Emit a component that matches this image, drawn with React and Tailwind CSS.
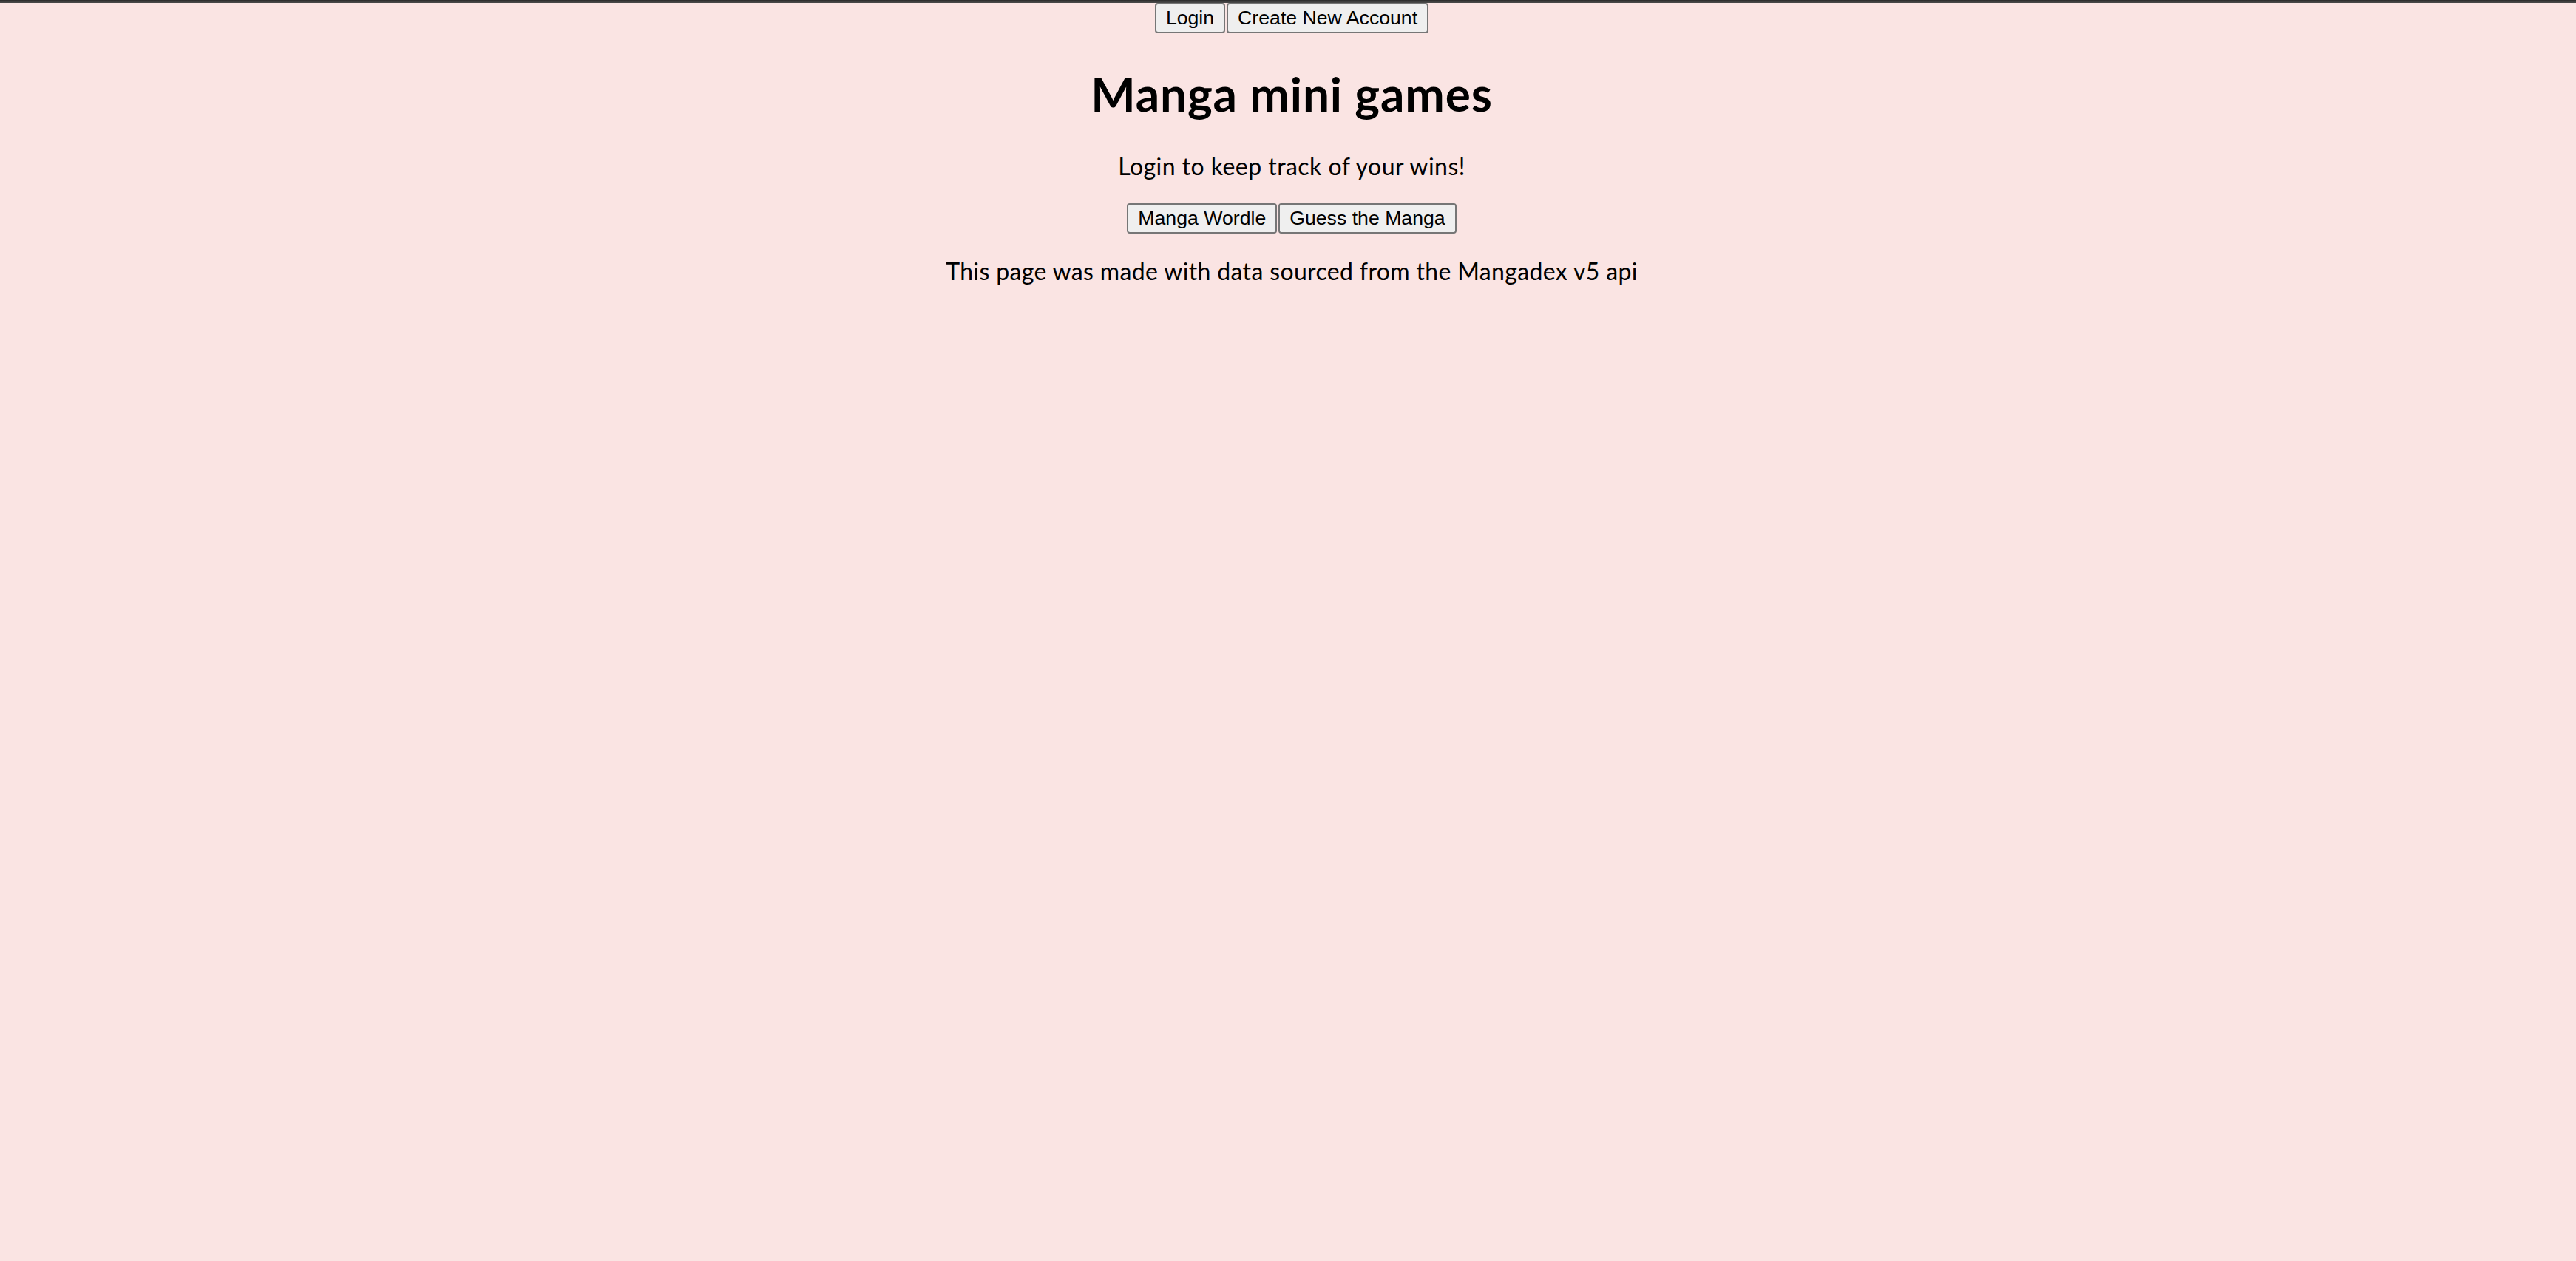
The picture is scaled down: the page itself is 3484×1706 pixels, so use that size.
const btn =
    "h-[41px] px-[13px] inline-flex items-center justify-center bg-[#efefef] border-2 border-[#767676] rounded-[4px] text-black text-[26.67px] leading-none tracking-normal font-['Liberation_Sans',Arial,sans-serif]";

export default function App() {
    return (
        <div className="min-h-screen pl-[10px] bg-[#fae4e3] text-black text-center font-['Lato','Open_Sans',sans-serif]">
            <div className="-ml-[10px] h-[4px] bg-gradient-to-b from-[#2c2c2c] to-[#4b4b4b]" />

            <div className="flex justify-center gap-[2px]">
                <button className={btn}>Login</button>
                <button className={btn}>Create New Account</button>
            </div>

            <h1 className="mt-[45px] text-[64px] font-bold leading-[74px] tracking-[0.85px]">Manga mini games</h1>

            <p className="mt-[42px] text-[32px] leading-[37px] tracking-[0.45px]">Login to keep track of your wins!</p>

            <div className="mt-[32px] flex justify-center gap-[2px]">
                <button className={btn}>Manga Wordle</button>
                <button className={btn}>Guess the Manga</button>
            </div>

            <p className="mt-[32px] text-[32px] leading-[37px] tracking-[0.35px]">
                This page was made with data sourced from the Mangadex v5 api
            </p>
        </div>
    );
}
